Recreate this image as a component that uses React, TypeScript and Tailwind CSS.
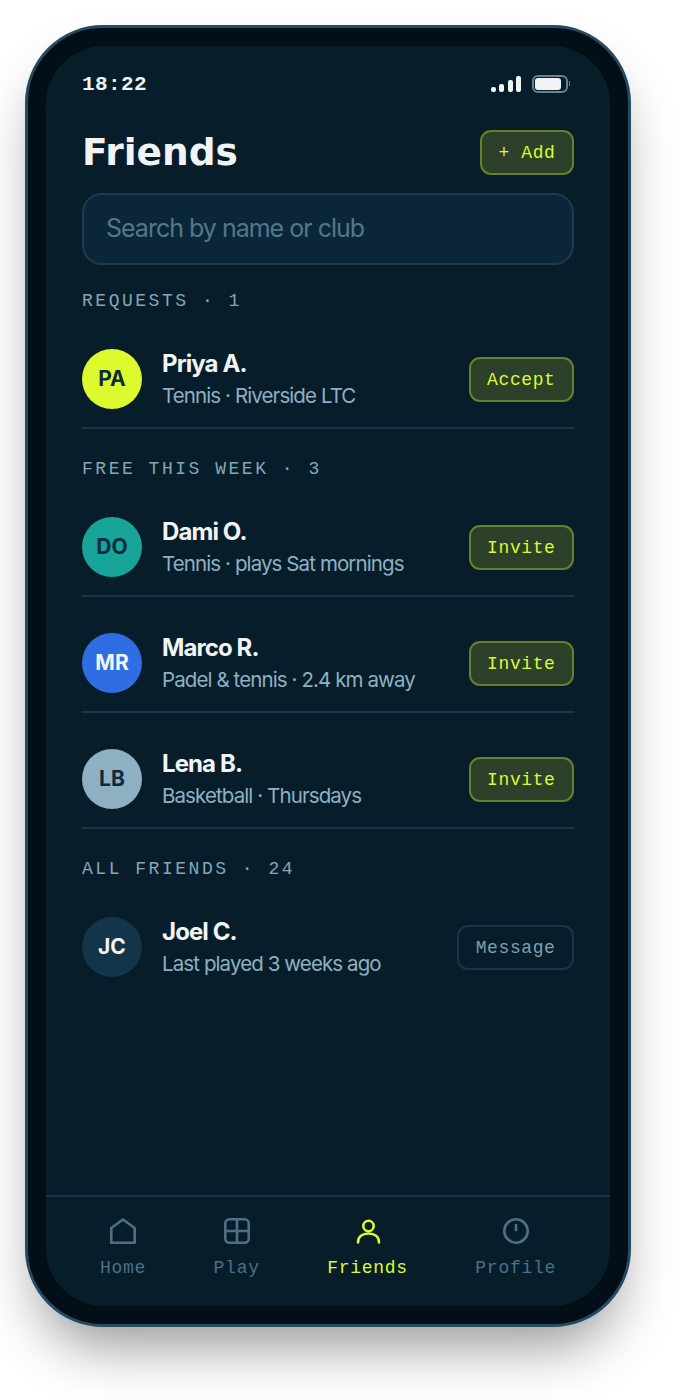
import React from "react";

const MONO = "font-['Liberation_Mono','DejaVu_Sans_Mono',monospace]";

const sections = [
  {
    title: "REQUESTS · 1",
    rows: [{ initials: "PA", name: "Priya A.", sub: "Tennis · Riverside LTC", action: "Accept", avatar: "bg-[#dcfa2e] text-[#0b2a3d]" }],
  },
  {
    title: "FREE THIS WEEK · 3",
    rows: [
      { initials: "DO", name: "Dami O.", sub: "Tennis · plays Sat mornings", action: "Invite", avatar: "bg-[#16a598] text-[#0b2a3d]" },
      { initials: "MR", name: "Marco R.", sub: "Padel & tennis · 2.4 km away", action: "Invite", avatar: "bg-[#2f6de3] text-[#f0f4f5]" },
      { initials: "LB", name: "Lena B.", sub: "Basketball · Thursdays", action: "Invite", avatar: "bg-[#8fb0c2] text-[#0b2a3d]" },
    ],
  },
];

function ActionButton({ label, muted }: { label: string; muted?: boolean }) {
  return (
    <button
      className={`${MONO} h-[45px] px-[16.5px] pt-[2px] rounded-[11px] border-2 text-[18px] tracking-[0.6px] ${
        muted ? "border-[#1d3442] text-[#7f9fae]" : "bg-[#2d4029] border-[#64822c] text-[#dcfa2e]"
      }`}
    >
      {label}
    </button>
  );
}

function Row({ initials, name, sub, action, avatar, muted, last }: {
  initials: string;
  name: string;
  sub: string;
  action: string;
  avatar: string;
  muted?: boolean;
  last?: boolean;
}) {
  return (
    <div className={`flex items-center gap-5 pt-5 ${last ? "" : "pb-[18px] border-b-2 border-[#1d3442]"}`}>
      <div className={`w-[60px] h-[60px] rounded-full flex items-center justify-center text-[21px] font-bold shrink-0 ${avatar}`}>
        {initials}
      </div>
      <div className="flex-1 min-w-0 flex flex-col gap-[5px] pt-[1px]">
        <div className="text-[24px] leading-[27px] font-bold tracking-[-0.9px] text-[#f0f4f5]">{name}</div>
        <div className="text-[20.5px] leading-[27px] tracking-[-0.9px] text-[#8fb0c2]">{sub}</div>
      </div>
      <ActionButton label={action} muted={muted} />
    </div>
  );
}

function SectionLabel({ children }: { children: React.ReactNode }) {
  return <div className={`${MONO} text-[18px] leading-[18px] tracking-[2.52px] text-[#86a6b6] mb-[19px]`}>{children}</div>;
}

function NavItem({ label, active, children }: { label: string; active?: boolean; children: React.ReactNode }) {
  return (
    <div className={`flex flex-col items-center gap-[11px] ${active ? "text-[#dcfa2e]" : "text-[#4e6f85]"}`}>
      <svg width="32" height="32" viewBox="0 0 32 32" fill="none" stroke="currentColor" strokeWidth="2.6" strokeLinecap="round" strokeLinejoin="round">
        {children}
      </svg>
      <span className={`${MONO} text-[18px] leading-[20px] tracking-[0.72px]`}>{label}</span>
    </div>
  );
}

export default function App() {
  return (
    <div className="w-[680px] h-[1400px] bg-white pt-[25px] pl-[25px] font-['Inter','Liberation_Sans',sans-serif]">
      <div className="w-[606px] h-[1302px] rounded-[78px] border-[3px] border-[#264a60] bg-[#020f18] p-[18px] shadow-[0_32px_56px_-14px_rgba(0,0,0,0.42)]">
        <div className="h-full rounded-[58px] bg-[#071e2a] flex flex-col overflow-hidden">
          <div className="flex-1 px-9 pt-[26px]">
            {/* Status bar */}
            <div className="h-6 flex items-center justify-between">
              <span className={`${MONO} pt-[1px] text-[21px] font-bold tracking-[0.4px] text-[#f0f4f5]`}>18:22</span>
              <div className="flex items-center gap-[11px] mr-[4px] -mt-[1px]">
                <div className="flex items-end gap-[3.5px]">
                  <div className="w-[5px] h-[5px] rounded-[2px] bg-[#f0f4f5]" />
                  <div className="w-[5px] h-[8px] rounded-[2px] bg-[#f0f4f5]" />
                  <div className="w-[5px] h-[12px] rounded-[2px] bg-[#f0f4f5]" />
                  <div className="w-[5px] h-[16px] rounded-[2px] bg-[#f0f4f5]" />
                </div>
                <div className="flex items-center gap-[1px]">
                  <div className="w-[36px] h-[18px] rounded-[6px] border-2 border-[#6b8190] p-[1px]">
                    <div className="w-[26px] h-full rounded-[3px] bg-[#f0f4f5]" />
                  </div>
                  <div className="w-[1px] h-[5px] bg-[#6b8190]" />
                </div>
              </div>
            </div>

            {/* Header */}
            <div className="mt-[34px] flex items-center justify-between">
              <h1 className="text-[37.5px] leading-[45px] font-bold text-[#f0f4f5] font-['DejaVu_Sans',sans-serif]">Friends</h1>
              <ActionButton label="+ Add" />
            </div>

            {/* Search */}
            <div className="mt-[18px] h-[72px] rounded-[20px] border-2 border-[#1e3a4c] bg-[#0b2638] flex items-center px-[22px] text-[25px] tracking-[-1px] text-[#54778c]">
              Search by name or club
            </div>

            <div className="mt-[27px]">
              {sections.map((section) => (
                <div key={section.title} className="mb-[31px]">
                  <SectionLabel>{section.title}</SectionLabel>
                  <div className="flex flex-col gap-4">
                    {section.rows.map((row) => (
                      <Row key={row.name} {...row} />
                    ))}
                  </div>
                </div>
              ))}
              <SectionLabel>ALL FRIENDS · 24</SectionLabel>
              <Row initials="JC" name="Joel C." sub="Last played 3 weeks ago" action="Message" avatar="bg-[#14344a] text-[#f0f4f5]" muted last />
            </div>
          </div>

          {/* Bottom nav */}
          <div className="h-[111px] border-t-2 border-[#1d3442] bg-[#071e2a] flex justify-between px-[54px] pt-[18px]">
            <NavItem label="Home">
              <path d="M4.3 13 L16 4.5 L27.7 13 V27.7 H4.3 Z" />
            </NavItem>
            <NavItem label="Play">
              <rect x="4.3" y="4.3" width="23.4" height="23.4" rx="4" />
              <path d="M16 4.3 V27.7 M4.3 16 H27.7" />
            </NavItem>
            <NavItem label="Friends" active>
              <circle cx="16.5" cy="11" r="5.2" />
              <path d="M6 27.5 C6 21.5 10.5 18.5 16.5 18.5 C22.5 18.5 27 21.5 27 27.5" />
            </NavItem>
            <NavItem label="Profile">
              <circle cx="16" cy="16" r="11.7" />
              <path d="M16 10 V15" />
            </NavItem>
          </div>
        </div>
      </div>
    </div>
  );
}
